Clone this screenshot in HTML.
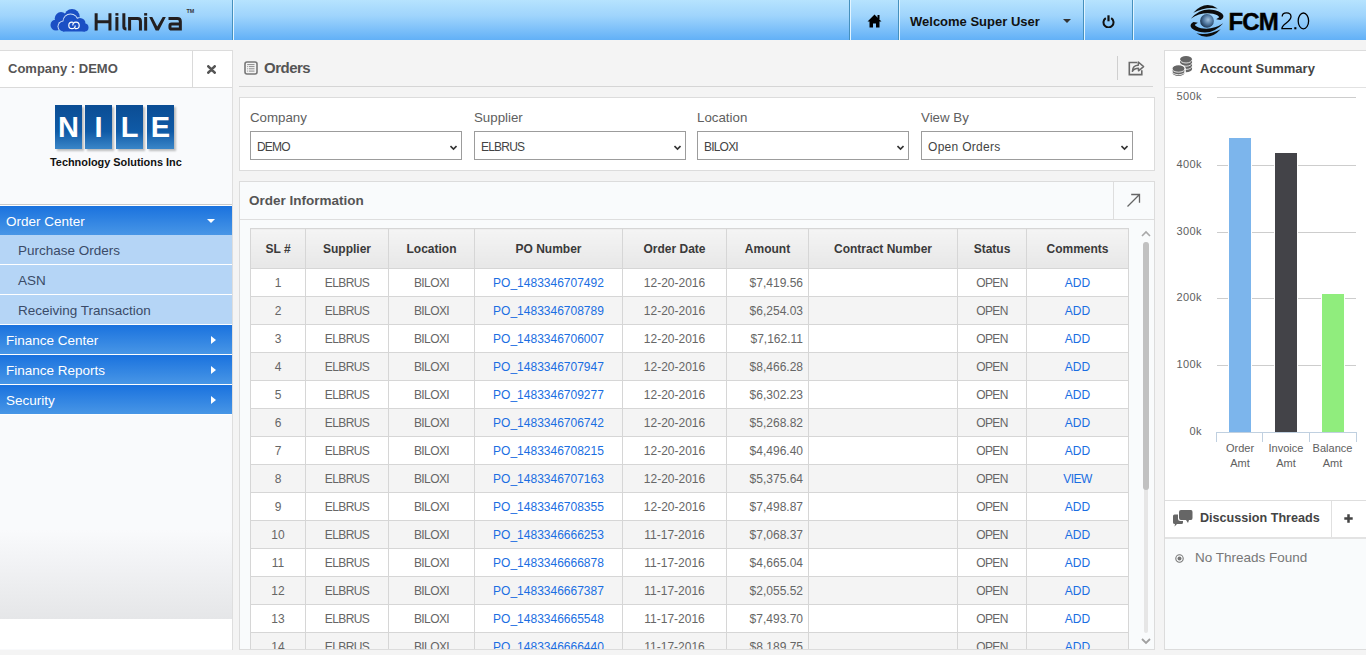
<!DOCTYPE html>
<html><head><meta charset="utf-8">
<style>
*{box-sizing:border-box;margin:0;padding:0}
html,body{width:1366px;height:655px;overflow:hidden;background:#f4f4f4;font-family:"Liberation Sans",sans-serif;position:relative}
.a{position:absolute}
#hdr{left:0;top:0;width:1366px;height:40px;background:linear-gradient(#b6e3fe,#9fd4fc 40%,#62b0f7)}
.sep{position:absolute;top:0;height:40px;width:2px;border-left:1px solid #4590bd;border-right:1px solid #e2f4ff}
.menu{position:absolute;left:0;width:232px;height:30px;color:#fff;font-size:13.5px;line-height:31px;padding-left:6px;background:linear-gradient(#1a72de,#4896e6);border-bottom:1px solid #fff}
.sub{position:absolute;left:0;width:232px;height:30px;color:#3a4b68;font-size:13.5px;line-height:31px;padding-left:18px;background:#b5d5f6;border-bottom:1px solid #fff}
.arr{position:absolute;left:211px;top:11px;width:0;height:0;border-left:5px solid #fff;border-top:4px solid transparent;border-bottom:4px solid transparent}
.panel{position:absolute;background:#fff;border:1px solid #dcdcdc}
.lbl{position:absolute;font-size:13.3px;color:#606060}
.sel{position:absolute;top:131px;width:212px;height:29px;border:1px solid #9c9c9c;background:#fff;font-size:12px;color:#444;line-height:31px;padding-left:6px;letter-spacing:-0.8px}
.chev{position:absolute;right:4px;top:12px;width:7px;height:7px}
table{border-collapse:collapse;position:absolute;left:250px;top:228px;table-layout:fixed;width:879px}
td,th{border:1px solid #d6d6d6;text-align:center;font-size:12px;color:#666;height:28px;padding:0}
th{height:40px;background:linear-gradient(#f4f4f4,#e7e7e7);color:#3a3a3a;font-weight:bold;font-size:12px}
tr:nth-child(odd) td{background:#f4f4f4}
td{background:#fff}
td a{color:#1a6ee2;text-decoration:none}
.c{letter-spacing:-0.6px}
.amt{text-align:right;padding-right:5px}
.yl{position:absolute;font-size:11px;color:#606060;text-align:right;width:30px;margin-top:0px;letter-spacing:0.4px}
.gl{position:absolute;left:1217px;width:139px;height:1px;background:#cdcdcd}
</style></head><body>
<!-- HEADER -->
<div id="hdr" class="a">
  <svg class="a" style="left:0;top:0" width="100" height="40" viewBox="0 0 100 40">
    <defs><clipPath id="bc"><circle cx="56" cy="25" r="5.5"/><circle cx="61" cy="18.3" r="6.2"/><circle cx="72" cy="16.6" r="7.7"/><rect x="55" y="19" width="22" height="10.7"/></clipPath></defs>
    <g fill="#1b4fc4"><circle cx="56" cy="25" r="5.5"/><circle cx="61" cy="18.3" r="6.2"/><circle cx="72" cy="16.6" r="7.7"/><rect x="55" y="19" width="22" height="10.7"/></g>
    <g clip-path="url(#bc)" fill="#cfe0f7"><circle cx="63.5" cy="26.5" r="6"/><circle cx="70.5" cy="21.5" r="8"/><circle cx="80" cy="23.5" r="6.4"/><rect x="62" y="25" width="24" height="7.2"/></g>
    <g fill="#1b4fc4"><circle cx="63.5" cy="26.5" r="5"/><circle cx="70.5" cy="21.5" r="7.1"/><circle cx="80" cy="23.5" r="5.5"/><circle cx="84.5" cy="27.5" r="4"/><rect x="63" y="24" width="22" height="7.5"/></g>
    <g fill="none" stroke="#fff" stroke-width="1.2"><circle cx="72" cy="25.4" r="3.2" stroke-dasharray="16 4"/><circle cx="76" cy="25.4" r="3.2" stroke-dasharray="16 4" transform="rotate(180 76 25.4)"/></g>
  </svg>
  <svg class="a" style="left:90px;top:8px" width="100" height="26" viewBox="90 8 100 26">
    <g fill="none" stroke="#231f20" stroke-width="3">
    <path d="M96.15 13.3 V30.6 M109.95 13.3 V30.6 M96.15 21.75 H109.95"/>
    <path d="M116.9 17 V30.6"/>
    <path d="M123.85 13.3 V26.8 Q123.85 29.1 126.4 29.1"/>
    <path d="M129.6 30.6 V18.55 H137.6 Q140.45 18.55 140.45 21.4 V30.6"/>
    <path d="M145.65 17 V30.6"/>
    <path d="M168.5 18.5 H177.4 Q180.35 18.5 180.35 21.4 V30.6 M180.35 29.1 H171.6 Q169.95 29.1 169.95 27.5 V25.7 Q169.95 24.05 171.6 24.05 H180.35"/>
    </g>
    <g fill="#231f20">
    <rect x="115.4" y="13.1" width="3" height="2.5"/><rect x="144.15" y="13.1" width="3" height="2.5"/>
    <polygon points="149.2,17 152.3,17 157.25,26.6 162.7,17 165.8,17 158.8,30.6 155.7,30.6"/>
    </g>
  </svg>
  <div class="a" style="left:185.5px;top:8px;font-size:6px;font-weight:bold;color:#333;transform:scaleX(0.9)">TM</div>
  <div class="sep" style="left:232px"></div>
  <div class="sep" style="left:849px"></div>
  <div class="sep" style="left:898px"></div>
  <div class="sep" style="left:1083px"></div>
  <div class="sep" style="left:1132px"></div>
  <!-- home -->
  <svg class="a" style="left:867px;top:14px" width="15" height="14" viewBox="0 0 15 14">
    <path d="M0.5 7.5 L7.5 0.5 L14.5 7.5 L12.5 7.5 L12.5 13.5 L9 13.5 L9 9.5 L6 9.5 L6 13.5 L2.5 13.5 L2.5 7.5 Z" fill="#000"/>
    <rect x="10.5" y="1" width="2" height="4" fill="#000"/>
  </svg>
  <div class="a" style="left:910px;top:14px;font-size:13px;font-weight:bold;color:#111">Welcome Super User</div>
  <div class="a" style="left:1063px;top:19px;width:0;height:0;border-left:4px solid transparent;border-right:4px solid transparent;border-top:4px solid #333"></div>
  <!-- power -->
  <svg class="a" style="left:1102px;top:15px" width="13" height="13" viewBox="0 0 13 13">
    <path d="M3.8 3.2 A5 5 0 1 0 9.2 3.2" fill="none" stroke="#111" stroke-width="2"/>
    <line x1="6.5" y1="0.3" x2="6.5" y2="6.3" stroke="#111" stroke-width="2.2"/>
  </svg>
  <!-- FCM logo -->
  <svg class="a" style="left:1185px;top:2px" width="45" height="38" viewBox="0 0 45 38">
    <defs><radialGradient id="eg" cx="58%" cy="42%" r="60%"><stop offset="0" stop-color="#a3c2de"/><stop offset="0.55" stop-color="#4f769e"/><stop offset="1" stop-color="#1c3450"/></radialGradient></defs>
    <g fill="#0c0c0c">
    <path d="M8.3 10.7 Q20 -2 32.7 6.5 Q21 4.2 8.3 10.7 Z"/>
    <path d="M5.8 16.8 Q16 5 30 8.3 Q37 10 38.3 13.5 Q39 16.3 35.5 18 L31.2 17.2 L34.2 15.2 Q33.5 13.3 28 11.8 Q16 9.8 5.8 16.8 Z"/>
    <path d="M38.2 21.2 Q28 33 14 29.7 Q7 28 5.7 24.5 Q5 21.7 8.5 20 L12.8 20.8 L9.8 22.8 Q10.5 24.7 16 26.2 Q28 28.2 38.2 21.2 Z"/>
    <path d="M35.7 27.3 Q24 40 11.3 31.3 Q23 33.8 35.7 27.3 Z"/>
    </g>
    <circle cx="22" cy="18.9" r="6.9" fill="url(#eg)"/>
  </svg>
  <div class="a" style="left:1228.6px;top:8px;font-size:24px;font-weight:bold;color:#000;letter-spacing:-0.9px;-webkit-text-stroke:0.45px #000">FCM</div>
  <svg class="a" style="left:1278px;top:10px" width="34" height="22" viewBox="1278 10 34 22">
    <path d="M1282.2 16.6 C1282.2 14 1284 12.9 1286.5 12.9 C1289.4 12.9 1291 14.6 1291 16.8 C1291 19.4 1288.6 21.2 1285.6 23.6 C1283 25.7 1281.9 27.2 1281.9 28.7 L1292 28.7" fill="none" stroke="#000" stroke-width="1.3"/>
    <rect x="1294.3" y="27.2" width="2.1" height="2.1" fill="#000"/>
    <ellipse cx="1303.4" cy="20.9" rx="5.2" ry="7.9" fill="none" stroke="#000" stroke-width="1.3"/>
  </svg>
</div>

<!-- LEFT SIDEBAR -->
<div class="a" style="left:0;top:50px;width:233px;height:600px;background:#f9fafc;border-right:1px solid #dedede;border-top:1px solid #dcdcdc"></div>
<div class="a" style="left:0;top:51px;width:232px;height:37px;background:#fff;border-bottom:1px solid #dadada"></div>
<div class="a" style="left:192px;top:51px;width:1px;height:36px;background:#dadada"></div>
<div class="a" style="left:8px;top:61px;font-size:13px;font-weight:bold;color:#555">Company : DEMO</div>
<svg class="a" style="left:207px;top:65px" width="9" height="9" viewBox="0 0 9 9"><path d="M1.3 1.3 L7.7 7.7 M7.7 1.3 L1.3 7.7" stroke="#555" stroke-width="2.6" stroke-linecap="round"/></svg>
<!-- NILE logo -->

<div class="a" style="left:55px;top:105px;width:27px;height:44px;background:linear-gradient(#0b4d94,#0f5aa6 60%,#3a86c8);box-shadow:2px 2px 2px rgba(0,0,0,.25)"></div>
<div class="a" style="left:85px;top:105px;width:27px;height:44px;background:linear-gradient(#0b4d94,#0f5aa6 60%,#3a86c8);box-shadow:2px 2px 2px rgba(0,0,0,.25)"></div>
<div class="a" style="left:116px;top:105px;width:27px;height:44px;background:linear-gradient(#0b4d94,#0f5aa6 60%,#3a86c8);box-shadow:2px 2px 2px rgba(0,0,0,.25)"></div>
<div class="a" style="left:147px;top:105px;width:27px;height:44px;background:linear-gradient(#0b4d94,#0f5aa6 60%,#3a86c8);box-shadow:2px 2px 2px rgba(0,0,0,.25)"></div>
<div class="a" style="left:55px;top:112px;width:27px;text-align:center;font-size:29px;font-weight:bold;color:#fff;line-height:30px">N</div>
<div class="a" style="left:85px;top:112px;width:27px;text-align:center;font-size:29px;font-weight:bold;color:#fff;line-height:30px">I</div>
<div class="a" style="left:116px;top:112px;width:27px;text-align:center;font-size:29px;font-weight:bold;color:#fff;line-height:30px">L</div>
<div class="a" style="left:147px;top:112px;width:27px;text-align:center;font-size:29px;font-weight:bold;color:#fff;line-height:30px">E</div>
<div class="a" style="left:50px;top:156px;font-size:10.9px;font-weight:bold;color:#111;letter-spacing:0px">Technology Solutions Inc</div>
<div class="a" style="left:0;top:204px;width:232px;height:1px;background:#c9c9c9"></div>
<div class="menu" style="top:205px;border-top:1px solid #fff;border-bottom:0;line-height:31px">Order Center<div class="a" style="left:207px;top:13px;width:0;height:0;border-left:4px solid transparent;border-right:4px solid transparent;border-top:4px solid #fff"></div></div>
<div class="sub" style="top:235px">Purchase Orders</div>
<div class="sub" style="top:265px">ASN</div>
<div class="sub" style="top:295px">Receiving Transaction</div>
<div class="menu" style="top:325px">Finance Center<div class="arr"></div></div>
<div class="menu" style="top:355px">Finance Reports<div class="arr"></div></div>
<div class="menu" style="top:385px">Security<div class="arr"></div></div>
<div class="a" style="left:0;top:530px;width:232px;height:89px;background:linear-gradient(#f9fafc,#e5e6e8)"></div>
<div class="a" style="left:0;top:619px;width:232px;height:30px;background:#fff"></div>

<!-- ORDERS TITLE -->
<svg class="a" style="left:244px;top:61px" width="14" height="14" viewBox="0 0 14 14">
  <rect x="1" y="1" width="12" height="12" rx="2" fill="none" stroke="#777" stroke-width="1.6"/>
  <path d="M3.2 3.6 H10.5 M5 5.6 H10.5 M5 7.8 H10.5 M5 10.1 H10.5 M3.2 5.6 H4.2 M3.2 7.8 H4.2 M3.2 10.1 H4.2" stroke="#808080" stroke-width="0.9"/>
</svg>
<div class="a" style="left:264px;top:59px;font-size:15px;font-weight:bold;color:#555;letter-spacing:-0.5px">Orders</div>
<div class="a" style="left:1117px;top:56px;width:1px;height:24px;background:#cfcfcf"></div>
<svg class="a" style="left:1126px;top:58px" width="20" height="20" viewBox="1126 58 20 20">
  <path d="M1137.2 62.5 H1129.3 V74.6 H1141.8 V70.2" fill="none" stroke="#6a6a6a" stroke-width="1.6"/>
  <path d="M1132.4 71.3 C1132.6 67.2 1135 65.3 1138.3 65.3 V62 L1143.6 66.6 L1138.5 70.8 V68.2 C1135.7 68.2 1133.6 69.4 1132.4 71.3 Z" fill="#f4f4f4" stroke="#6a6a6a" stroke-width="1.5" stroke-linejoin="round"/>
</svg>
<div class="a" style="left:239px;top:86px;width:914px;height:1px;background:#d5d5d5"></div>

<!-- FILTER PANEL -->
<div class="panel" style="left:239px;top:97px;width:916px;height:74px"></div>
<div class="lbl" style="left:250px;top:110px">Company</div>
<div class="lbl" style="left:474px;top:110px">Supplier</div>
<div class="lbl" style="left:697px;top:110px">Location</div>
<div class="lbl" style="left:921px;top:110px">View By</div>
<div class="sel" style="left:250px">DEMO<svg class="chev" viewBox="0 0 7 7"><path d="M0.5 2 L3.5 5 L6.5 2" fill="none" stroke="#333" stroke-width="1.6"/></svg></div>
<div class="sel" style="left:474px">ELBRUS<svg class="chev" viewBox="0 0 7 7"><path d="M0.5 2 L3.5 5 L6.5 2" fill="none" stroke="#333" stroke-width="1.6"/></svg></div>
<div class="sel" style="left:697px">BILOXI<svg class="chev" viewBox="0 0 7 7"><path d="M0.5 2 L3.5 5 L6.5 2" fill="none" stroke="#333" stroke-width="1.6"/></svg></div>
<div class="sel" style="left:921px;letter-spacing:0.3px">Open Orders<svg class="chev" viewBox="0 0 7 7"><path d="M0.5 2 L3.5 5 L6.5 2" fill="none" stroke="#333" stroke-width="1.6"/></svg></div>

<!-- ORDER INFO PANEL -->
<div class="panel" style="left:239px;top:181px;width:916px;height:469px;background:#f9fbfc"></div>
<div class="a" style="left:240px;top:219px;width:914px;height:1px;background:#dedede"></div>
<div class="a" style="left:1113px;top:182px;width:1px;height:37px;background:#dedede"></div>
<div class="a" style="left:249px;top:193px;font-size:13.5px;font-weight:bold;color:#555">Order Information</div>
<svg class="a" style="left:1126px;top:193px" width="15" height="15" viewBox="0 0 15 15"><path d="M1.5 13.5 L13.5 1.5 M5.2 1.5 H13.5 V9.8" fill="none" stroke="#666" stroke-width="1.3"/></svg>
<div class="a" style="left:240px;top:228px;width:914px;height:421px;overflow:hidden">
<table style="left:10px;top:0">
<colgroup><col style="width:55px"><col style="width:83px"><col style="width:86px"><col style="width:148px"><col style="width:104px"><col style="width:82px"><col style="width:149px"><col style="width:69px"><col style="width:102px"></colgroup>
<tr><th>SL #</th><th>Supplier</th><th>Location</th><th>PO Number</th><th>Order Date</th><th>Amount</th><th>Contract Number</th><th>Status</th><th>Comments</th></tr>
<tr><td>1</td><td class="c">ELBRUS</td><td class="c">BILOXI</td><td><a>PO_1483346707492</a></td><td>12-20-2016</td><td class="amt">$7,419.56</td><td></td><td class="c">OPEN</td><td><a>ADD</a></td></tr>
<tr><td>2</td><td class="c">ELBRUS</td><td class="c">BILOXI</td><td><a>PO_1483346708789</a></td><td>12-20-2016</td><td class="amt">$6,254.03</td><td></td><td class="c">OPEN</td><td><a>ADD</a></td></tr>
<tr><td>3</td><td class="c">ELBRUS</td><td class="c">BILOXI</td><td><a>PO_1483346706007</a></td><td>12-20-2016</td><td class="amt">$7,162.11</td><td></td><td class="c">OPEN</td><td><a>ADD</a></td></tr>
<tr><td>4</td><td class="c">ELBRUS</td><td class="c">BILOXI</td><td><a>PO_1483346707947</a></td><td>12-20-2016</td><td class="amt">$8,466.28</td><td></td><td class="c">OPEN</td><td><a>ADD</a></td></tr>
<tr><td>5</td><td class="c">ELBRUS</td><td class="c">BILOXI</td><td><a>PO_1483346709277</a></td><td>12-20-2016</td><td class="amt">$6,302.23</td><td></td><td class="c">OPEN</td><td><a>ADD</a></td></tr>
<tr><td>6</td><td class="c">ELBRUS</td><td class="c">BILOXI</td><td><a>PO_1483346706742</a></td><td>12-20-2016</td><td class="amt">$5,268.82</td><td></td><td class="c">OPEN</td><td><a>ADD</a></td></tr>
<tr><td>7</td><td class="c">ELBRUS</td><td class="c">BILOXI</td><td><a>PO_1483346708215</a></td><td>12-20-2016</td><td class="amt">$4,496.40</td><td></td><td class="c">OPEN</td><td><a>ADD</a></td></tr>
<tr><td>8</td><td class="c">ELBRUS</td><td class="c">BILOXI</td><td><a>PO_1483346707163</a></td><td>12-20-2016</td><td class="amt">$5,375.64</td><td></td><td class="c">OPEN</td><td class="c"><a>VIEW</a></td></tr>
<tr><td>9</td><td class="c">ELBRUS</td><td class="c">BILOXI</td><td><a>PO_1483346708355</a></td><td>12-20-2016</td><td class="amt">$7,498.87</td><td></td><td class="c">OPEN</td><td><a>ADD</a></td></tr>
<tr><td>10</td><td class="c">ELBRUS</td><td class="c">BILOXI</td><td><a>PO_1483346666253</a></td><td>11-17-2016</td><td class="amt">$7,068.37</td><td></td><td class="c">OPEN</td><td><a>ADD</a></td></tr>
<tr><td>11</td><td class="c">ELBRUS</td><td class="c">BILOXI</td><td><a>PO_1483346666878</a></td><td>11-17-2016</td><td class="amt">$4,665.04</td><td></td><td class="c">OPEN</td><td><a>ADD</a></td></tr>
<tr><td>12</td><td class="c">ELBRUS</td><td class="c">BILOXI</td><td><a>PO_1483346667387</a></td><td>11-17-2016</td><td class="amt">$2,055.52</td><td></td><td class="c">OPEN</td><td><a>ADD</a></td></tr>
<tr><td>13</td><td class="c">ELBRUS</td><td class="c">BILOXI</td><td><a>PO_1483346665548</a></td><td>11-17-2016</td><td class="amt">$7,493.70</td><td></td><td class="c">OPEN</td><td><a>ADD</a></td></tr>
<tr><td>14</td><td class="c">ELBRUS</td><td class="c">BILOXI</td><td><a>PO_1483346666440</a></td><td>11-17-2016</td><td class="amt">$8,189.75</td><td></td><td class="c">OPEN</td><td><a>ADD</a></td></tr>
</table>
</div>
<!-- scrollbar -->
<svg class="a" style="left:1141px;top:230px" width="10" height="7" viewBox="0 0 10 7"><path d="M1 6 L5 2 L9 6" fill="none" stroke="#a8a8a8" stroke-width="1.6"/></svg>
<div class="a" style="left:1144px;top:242px;width:4px;height:391px;background:#e6e6e6;border-radius:2px"></div>
<div class="a" style="left:1143px;top:242px;width:6px;height:248px;background:#c1c1c1;border-radius:3px"></div>
<svg class="a" style="left:1141px;top:637px" width="10" height="8" viewBox="0 0 10 8"><path d="M1 2 L5 6 L9 2" fill="none" stroke="#a0a0a0" stroke-width="1.8"/></svg>

<!-- RIGHT PANEL -->
<div class="a" style="left:1164px;top:50px;width:202px;height:600px;background:#fff;border:1px solid #dcdcdc;border-right:0"></div>
<div class="a" style="left:1165px;top:87px;width:201px;height:1px;background:#e2e2e2"></div>
<svg class="a" style="left:1168px;top:52px" width="28" height="28" viewBox="1168 52 28 28">
  <path d="M1180.05 59.4 V69 A6 3.3 0 0 0 1192.05 69 V59.4 A6 3.4 0 0 0 1180.05 59.4 Z" fill="#666"/>
  <g fill="none" stroke="#fff" stroke-width="0.8">
    <path d="M1180.05 59.7 A6 3.3 0 0 0 1192.05 59.7"/><path d="M1180.05 62.9 A6 3.3 0 0 0 1192.05 62.9"/><path d="M1180.05 66.1 A6 3.3 0 0 0 1192.05 66.1"/>
  </g>
  <path d="M1171.9 68.3 V73 A6.6 3.6 0 0 0 1185.1 73 V68.3 A6.6 3.6 0 0 0 1171.9 68.3 Z" fill="#666" stroke="#fff" stroke-width="1.3"/>
  <g fill="none" stroke="#fff" stroke-width="0.8">
    <path d="M1171.9 68.6 A6.6 3.6 0 0 0 1185.1 68.6"/><path d="M1171.9 71.1 A6.6 3.6 0 0 0 1185.1 71.1"/>
  </g>
</svg>
<div class="a" style="left:1200px;top:61px;font-size:13px;font-weight:bold;color:#444">Account Summary</div>
<!-- chart -->
<div class="gl" style="top:97px"></div>
<div class="gl" style="top:165px"></div>
<div class="gl" style="top:232px"></div>
<div class="gl" style="top:298px"></div>
<div class="gl" style="top:365px"></div>
<div class="yl" style="left:1172px;top:90px">500k</div>
<div class="yl" style="left:1172px;top:158px">400k</div>
<div class="yl" style="left:1172px;top:225px">300k</div>
<div class="yl" style="left:1172px;top:291px">200k</div>
<div class="yl" style="left:1172px;top:358px">100k</div>
<div class="yl" style="left:1172px;top:425px">0k</div>
<div class="a" style="left:1229px;top:138px;width:22px;height:294px;background:#7cb5ec;box-shadow:0 0 0 1px #fff"></div>
<div class="a" style="left:1275px;top:153px;width:22px;height:279px;background:#434348;box-shadow:0 0 0 1px #fff"></div>
<div class="a" style="left:1322px;top:294px;width:22px;height:138px;background:#90ed7d;box-shadow:0 0 0 1px #fff"></div>
<div class="a" style="left:1216px;top:432px;width:141px;height:1px;background:#c0d0e0"></div>
<div class="a" style="left:1216px;top:432px;width:1px;height:10px;background:#c0d0e0"></div>
<div class="a" style="left:1262px;top:432px;width:1px;height:10px;background:#c0d0e0"></div>
<div class="a" style="left:1309px;top:432px;width:1px;height:10px;background:#c0d0e0"></div>
<div class="a" style="left:1356px;top:432px;width:1px;height:10px;background:#c0d0e0"></div>
<div class="a" style="left:1217px;top:441px;width:46px;text-align:center;font-size:11px;color:#606060;line-height:15px">Order<br>Amt</div>
<div class="a" style="left:1263px;top:441px;width:46px;text-align:center;font-size:11px;color:#606060;line-height:15px">Invoice<br>Amt</div>
<div class="a" style="left:1309px;top:441px;width:47px;text-align:center;font-size:11px;color:#606060;line-height:15px">Balance<br>Amt</div>

<!-- DISCUSSION -->
<div class="a" style="left:1165px;top:500px;width:201px;height:1px;background:#dedede"></div>
<div class="a" style="left:1165px;top:537px;width:201px;height:2px;background:#e3e3e3"></div>
<div class="a" style="left:1165px;top:539px;width:201px;height:110px;background:#f9fbfc"></div>
<div class="a" style="left:1331px;top:501px;width:1px;height:36px;background:#e0e0e0"></div>
<svg class="a" style="left:1172px;top:509px" width="21" height="18" viewBox="0 0 21 18">
  <path d="M7 3 Q7 1 9 1 H19 Q20.5 1 20.5 3 V9 Q20.5 11 19 11 H17 L16 14 L14 11 H9 Q7 11 7 9 Z" fill="#666"/>
  <path d="M1 7 Q1 5.5 2.5 5.5 H6 V10 Q6 12 8.5 12 H11 V13.5 Q11 15 9.5 15 H5 L2.5 17.5 L3 15 Q1 15 1 13.5 Z" fill="#666"/>
</svg>
<div class="a" style="left:1200px;top:511px;font-size:12.6px;font-weight:bold;color:#444">Discussion Threads</div>
<svg class="a" style="left:1344px;top:514px" width="9" height="9" viewBox="0 0 9 9"><path d="M4.5 0.3 V8.7 M0.3 4.5 H8.7" stroke="#444" stroke-width="2.5"/></svg>
<svg class="a" style="left:1175px;top:554px" width="9" height="9" viewBox="0 0 9 9"><circle cx="4.5" cy="4.5" r="3.7" fill="none" stroke="#777" stroke-width="1.1"/><circle cx="4.5" cy="4.5" r="2" fill="#777"/></svg>
<div class="a" style="left:1195px;top:550px;font-size:13.5px;color:#777">No Threads Found</div>
</body></html>
